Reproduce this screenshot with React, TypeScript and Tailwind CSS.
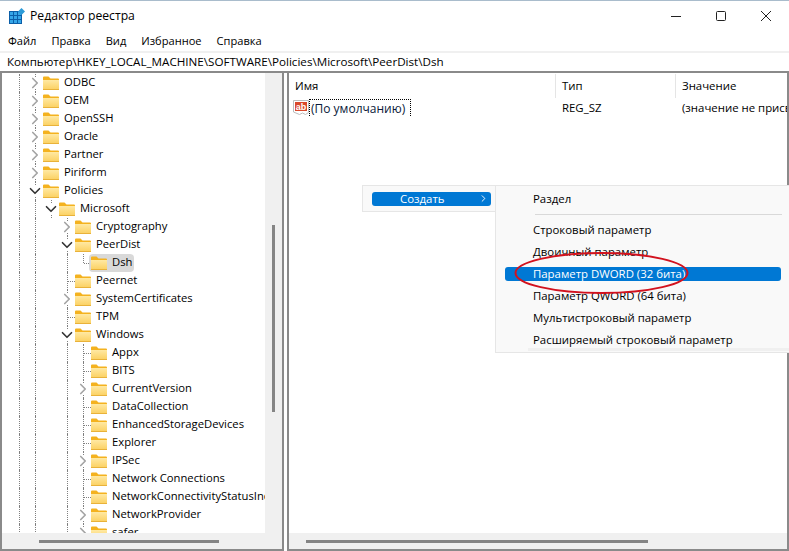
import { ChevronRight, ChevronDown } from "lucide-react";

type Row = {
  name: string;
  guides: number[]; // guide columns that carry a dotted vertical line
  depth: number; // column that holds the chevron or connector
  toggle?: "open" | "closed";
  selected?: boolean;
};

const rows: Row[] = [
  { name: "ODBC", guides: [0], depth: 1, toggle: "closed" },
  { name: "OEM", guides: [0], depth: 1, toggle: "closed" },
  { name: "OpenSSH", guides: [0], depth: 1, toggle: "closed" },
  { name: "Oracle", guides: [0], depth: 1, toggle: "closed" },
  { name: "Partner", guides: [0], depth: 1, toggle: "closed" },
  { name: "Piriform", guides: [0], depth: 1, toggle: "closed" },
  { name: "Policies", guides: [0], depth: 1, toggle: "open" },
  { name: "Microsoft", guides: [0, 1], depth: 2, toggle: "open" },
  { name: "Cryptography", guides: [0, 1], depth: 3, toggle: "closed" },
  { name: "PeerDist", guides: [0, 1], depth: 3, toggle: "open" },
  { name: "Dsh", guides: [0, 1, 3], depth: 4, selected: true },
  { name: "Peernet", guides: [0, 1], depth: 3 },
  { name: "SystemCertificates", guides: [0, 1], depth: 3, toggle: "closed" },
  { name: "TPM", guides: [0, 1], depth: 3 },
  { name: "Windows", guides: [0, 1], depth: 3, toggle: "open" },
  { name: "Appx", guides: [0, 1, 3], depth: 4 },
  { name: "BITS", guides: [0, 1, 3], depth: 4 },
  { name: "CurrentVersion", guides: [0, 1, 3], depth: 4, toggle: "closed" },
  { name: "DataCollection", guides: [0, 1, 3], depth: 4 },
  { name: "EnhancedStorageDevices", guides: [0, 1, 3], depth: 4 },
  { name: "Explorer", guides: [0, 1, 3], depth: 4 },
  { name: "IPSec", guides: [0, 1, 3], depth: 4, toggle: "closed" },
  { name: "Network Connections", guides: [0, 1, 3], depth: 4 },
  { name: "NetworkConnectivityStatusIndicator", guides: [0, 1, 3], depth: 4 },
  { name: "NetworkProvider", guides: [0, 1, 3], depth: 4, toggle: "closed" },
  { name: "safer", guides: [0, 1, 3], depth: 4, toggle: "closed" },
];

const menuItems = [
  { label: "Раздел" },
  { divider: true },
  { label: "Строковый параметр" },
  { label: "Двоичный параметр" },
  { label: "Параметр DWORD (32 бита)", active: true },
  { label: "Параметр QWORD (64 бита)" },
  { label: "Мультистроковый параметр" },
  { label: "Расширяемый строковый параметр" },
];

function Folder() {
  return (
    <svg width="16" height="14" viewBox="0 0 16 14" className="shrink-0">
      <defs>
        <linearGradient id="folderBody" x1="0" y1="0" x2="0" y2="1">
          <stop offset="0" stopColor="#ffe9a3" />
          <stop offset="1" stopColor="#fbd05f" />
        </linearGradient>
      </defs>
      <path d="M0 1.500A1 1 0 0 1 1 .5h4.500l2 2H15a1 1 0 0 1 1 1V5H0z" fill="#f4b21f" />
      <path d="M0 4h16v9a1 1 0 0 1-1 1H1a1 1 0 0 1-1-1z" fill="url(#folderBody)" />
      <path d="M0 13.500h16" stroke="#e9b23a" strokeWidth="1" />
    </svg>
  );
}

function AppIcon() {
  return (
    <svg width="16" height="16" viewBox="0 0 16 16" className="shrink-0">
      <rect x="0.5" y="3.500" width="12" height="12" fill="#35a6e8" stroke="#0b5fa8" />
      <path d="M4.500 3.500v12M8.500 3.500v12M.5 7.500h12M.5 11.500h12" stroke="#0b5fa8" strokeWidth="1" />
      <path d="M12.500 0l3.500 3.500-3.500 3.500L9 3.500z" fill="#2d9bd8" />
    </svg>
  );
}

function RegValueIcon() {
  return (
    <svg width="16" height="16" viewBox="0 0 16 16" className="shrink-0">
      <path d="M.5.5h15v12l-3 2-3-1.500-3 1.500-6-2.500z" fill="#fff" stroke="#bdbdbd" />
      <rect x="2" y="2" width="12" height="9" fill="#d9482b" />
      <text x="8" y="9.500" textAnchor="middle" fontSize="9" fontWeight="700" fill="#fff" fontFamily="Liberation Sans, sans-serif">
        ab
      </text>
    </svg>
  );
}

function TreeRow({ row }: { row: Row }) {
  return (
    <div className="flex h-[18px] shrink-0 items-center">
      {[0, 1, 2, 3, 4].slice(0, row.depth).map((i) => (
        <div key={i} className="flex h-full w-4 shrink-0 justify-center">
          {row.guides.includes(i) && <div className="h-full border-l border-dotted border-[#808080]" />}
        </div>
      ))}
      {row.toggle ? (
        <div className="flex h-full w-4 shrink-0 flex-col items-center">
          <div className="h-[3px] border-l border-dotted border-[#808080]" />
          <div className="-ml-px flex h-3 items-center justify-center">
            {row.toggle === "closed" ? (
              <ChevronRight size={18} strokeWidth={2.2} className="shrink-0 text-[#a3a3a3]" />
            ) : (
              <ChevronDown size={18} strokeWidth={2.2} className="shrink-0 text-[#333333]" />
            )}
          </div>
          <div className="h-[3px] border-l border-dotted border-[#808080]" />
        </div>
      ) : (
        <div className="flex h-full w-4 shrink-0 items-start pl-2">
          <div className={`border-l border-dotted border-[#808080] ${row.selected ? "h-[9px]" : "h-full"}`} />
          <div className="mt-[9px] w-[7px] border-t border-dotted border-[#808080]" />
        </div>
      )}
      <div className={`flex h-[18px] shrink-0 items-center gap-[5px] ${row.selected ? "-ml-[2px] rounded-sm bg-[#d9d9d9] pr-[2px] pl-[2px]" : ""}`}>
        <Folder />
        <span className="mb-[2px] whitespace-nowrap">{row.name}</span>
      </div>
    </div>
  );
}

export default function App() {
  return (
    <div className="relative flex h-[551px] w-[789px] flex-col overflow-hidden bg-white font-['Open_Sans','Noto_Sans',sans-serif] text-[11.4px] leading-[18px] text-black">
      {/* Title bar */}
      <div className="flex h-[31px] shrink-0 items-center border-t border-[#a9bccc] pl-[9px]">
        <AppIcon />
        <span className="ml-[5px] text-[12.2px]">Редактор реестра</span>
        <div className="ml-auto flex items-center gap-[35px] pr-[18px]">
          <svg width="10" height="10" viewBox="0 0 10 10"><path d="M0 5.500h10" stroke="#222" /></svg>
          <svg width="10" height="10" viewBox="0 0 10 10"><rect x=".5" y=".5" width="9" height="9" rx="1" fill="none" stroke="#222" /></svg>
          <svg width="10" height="10" viewBox="0 0 10 10"><path d="M0 0l10 10M10 0L0 10" stroke="#222" /></svg>
        </div>
      </div>

      {/* Menu */}
      <div className="flex h-[20px] shrink-0 items-center gap-[15px] pl-2 text-[11.1px]">
        <span>Файл</span>
        <span>Правка</span>
        <span>Вид</span>
        <span>Избранное</span>
        <span>Справка</span>
      </div>

      {/* Address bar */}
      <div className="flex h-[20px] shrink-0 items-center border-t-2 border-[#f0f0f0] pl-[7px] text-[11.65px]">
        Компьютер\HKEY_LOCAL_MACHINE\SOFTWARE\Policies\Microsoft\PeerDist\Dsh
      </div>

      {/* Panes */}
      <div className="flex min-h-0 flex-1 gap-[3px] border-t-2 border-[#8a8a8a]">
        {/* Tree */}
        <div className="flex w-[284px] shrink-0 flex-col border-x-2 border-b-2 border-[#8a8a8a] text-[11.25px]">
          <div className="flex min-h-0 flex-1">
            <div className="flex min-w-0 flex-1 flex-col overflow-hidden pt-px pl-[9px]">
              {rows.map((row) => (
                <TreeRow key={row.name} row={row} />
              ))}
            </div>
            <div className="flex w-[17px] shrink-0 justify-center bg-[#f0f0f0] pt-[152px]">
              <div className="h-[187px] w-[3px] bg-[#858585]" />
            </div>
          </div>
          <div className="flex h-[16px] shrink-0 items-center bg-[#f0f0f0] pl-[37px]">
            <div className="h-[3px] w-[180px] bg-[#858585]" />
          </div>
        </div>

        {/* List */}
        <div className="flex min-w-0 flex-1 flex-col border-x-2 border-b-2 border-[#8a8a8a]">
          <div className="flex h-[26px] shrink-0 items-center">
            <span className="w-[266px] pl-[6px]">Имя</span>
            <span className="h-[24px] border-l border-[#e5e5e5]" />
            <span className="w-[119px] pl-[6px]">Тип</span>
            <span className="h-[24px] border-l border-[#e5e5e5]" />
            <span className="pl-[6px]">Значение</span>
          </div>
          <div className="flex h-[18px] shrink-0 items-center overflow-hidden whitespace-nowrap">
            <div className="flex w-[267px] shrink-0 items-center pl-[4px]">
              <RegValueIcon />
              <span className="border border-dotted border-black pr-[5px] pl-px text-[12px] leading-[17px] text-[#0a1a3a]">(По умолчанию)</span>
            </div>
            <span className="w-[120px] shrink-0 pl-[6px]">REG_SZ</span>
            <span className="pl-[6px]">(значение не присвоено)</span>
          </div>
          <div className="flex-1" />
          <div className="flex h-[16px] shrink-0 items-center bg-[#f0f0f0] pl-[17px]">
            <div className="h-[3px] w-[342px] bg-[#858585]" />
          </div>
        </div>
      </div>

      {/* Context menu */}
      <div className="absolute top-[185px] left-[362px] flex h-[27px] w-[134px] items-center border border-r-0 border-[#e6e6e6] bg-[#f9f9f9] pl-[9px]">
        <div className="flex h-[14px] w-[119px] items-center rounded-[3px] bg-[#0078d4] text-white">
          <span className="ml-[28px]">Создать</span>
          <ChevronRight size={11} className="mr-[2px] ml-auto" />
        </div>
      </div>
      <div className="absolute top-[185px] left-[495px] flex w-[294px] flex-col border-y border-l border-[#e6e6e6] bg-[#f9f9f9] pt-[2px] pb-px">
        {menuItems.map((item, i) =>
          item.divider ? (
            <div key={i} className="my-[4px] mr-[7px] ml-[39px] h-px bg-[#d9d9d9]" />
          ) : (
            <div key={i} className="flex h-[22px] items-center pl-[9px]">
              <div className={`flex h-[14px] w-[276px] items-center rounded-[3px] pl-[28px] ${item.active ? "bg-[#0078d4] text-white" : ""}`}>
                {item.label}
              </div>
            </div>
          )
        )}
        <div className="absolute right-0 bottom-px left-[32px] h-[3px] bg-[#f0f0f0]" />
      </div>

      {/* Red annotation ellipse */}
      <svg width="789" height="551" className="pointer-events-none absolute top-0 left-0">
        <ellipse cx="601.500" cy="273" rx="86" ry="20" fill="none" stroke="#d2121e" strokeWidth="2" />
      </svg>
    </div>
  );
}
